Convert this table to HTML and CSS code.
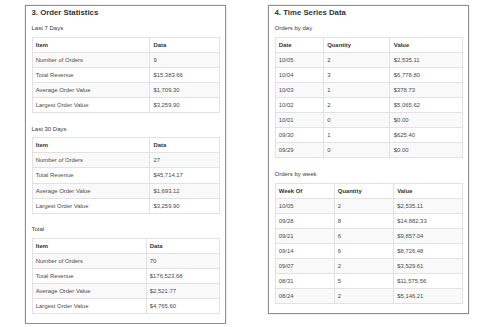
FILE: index.html
```html
<!DOCTYPE html>
<html>
<head>
<meta charset="utf-8">
<link rel="stylesheet" href="styles.css">
</head>
<body>
<div class="page">
  <section class="panel">
    <h3 class="panel-title">3. Order Statistics</h3>
    <h5 class="label">Last 7 Days</h5>
    <table class="grid">
      <colgroup><col class="c-a"><col></colgroup>
      <thead><tr><th>Item</th><th>Data</th></tr></thead>
      <tbody>
        <tr><td>Number of Orders</td><td>9</td></tr>
        <tr><td>Total Revenue</td><td>$15,383.66</td></tr>
        <tr><td>Average Order Value</td><td>$1,709.30</td></tr>
        <tr><td>Largest Order Value</td><td>$3,259.90</td></tr>
      </tbody>
    </table>
    <h5 class="label">Last 30 Days</h5>
    <table class="grid">
      <colgroup><col class="c-a"><col></colgroup>
      <thead><tr><th>Item</th><th>Data</th></tr></thead>
      <tbody>
        <tr><td>Number of Orders</td><td>27</td></tr>
        <tr><td>Total Revenue</td><td>$45,714.17</td></tr>
        <tr><td>Average Order Value</td><td>$1,693.12</td></tr>
        <tr><td>Largest Order Value</td><td>$3,259.90</td></tr>
      </tbody>
    </table>
    <h5 class="label">Total</h5>
    <table class="grid last">
      <colgroup><col class="c-b"><col></colgroup>
      <thead><tr><th>Item</th><th>Data</th></tr></thead>
      <tbody>
        <tr><td>Number of Orders</td><td>70</td></tr>
        <tr><td>Total Revenue</td><td>$176,523.68</td></tr>
        <tr><td>Average Order Value</td><td>$2,521.77</td></tr>
        <tr><td>Largest Order Value</td><td>$4,765.60</td></tr>
      </tbody>
    </table>
  </section>
  <section class="panel">
    <h3 class="panel-title">4. Time Series Data</h3>
    <h5 class="label">Orders by day</h5>
    <table class="grid">
      <colgroup><col class="d-1"><col class="d-2"><col></colgroup>
      <thead><tr><th>Date</th><th>Quantity</th><th>Value</th></tr></thead>
      <tbody>
        <tr><td>10/05</td><td>2</td><td>$2,535.11</td></tr>
        <tr><td>10/04</td><td>3</td><td>$6,778.80</td></tr>
        <tr><td>10/03</td><td>1</td><td>$378.73</td></tr>
        <tr><td>10/02</td><td>2</td><td>$5,065.62</td></tr>
        <tr><td>10/01</td><td>0</td><td>$0.00</td></tr>
        <tr><td>09/30</td><td>1</td><td>$625.40</td></tr>
        <tr><td>09/29</td><td>0</td><td>$0.00</td></tr>
      </tbody>
    </table>
    <h5 class="label">Orders by week</h5>
    <table class="grid last">
      <colgroup><col class="w-1"><col class="w-2"><col></colgroup>
      <thead><tr><th>Week Of</th><th>Quantity</th><th>Value</th></tr></thead>
      <tbody>
        <tr><td>10/05</td><td>2</td><td>$2,535.11</td></tr>
        <tr><td>09/28</td><td>8</td><td>$14,882.33</td></tr>
        <tr><td>09/21</td><td>6</td><td>$9,857.04</td></tr>
        <tr><td>09/14</td><td>6</td><td>$8,726.48</td></tr>
        <tr><td>09/07</td><td>2</td><td>$3,529.61</td></tr>
        <tr><td>08/31</td><td>5</td><td>$11,575.56</td></tr>
        <tr><td>08/24</td><td>2</td><td>$5,146.21</td></tr>
      </tbody>
    </table>
  </section>
</div>
</body>
</html>
```
FILE: styles.css
```css
html, body {
  margin: 0;
  padding: 0;
  background: #fff;
}
body {
  font-family: "Liberation Sans", Arial, sans-serif;
  color: #333;
}
.page {
  display: flex;
  align-items: flex-start;
  gap: 42px;
  padding: 5px 0 0 25px;
}
.panel {
  box-sizing: border-box;
  width: 201px;
  border: 1px solid #8f8f8f;
  box-shadow: 0 0 1px rgba(0, 0, 0, 0.35);
  padding: 2px 5.5px 8.5px;
  background: #fff;
}
.panel-title {
  margin: 0 0 6px;
  font-size: 7.8px;
  line-height: 10px;
  font-weight: bold;
  color: #333;
}
.label {
  margin: 0 0 4.6px;
  font-size: 6px;
  line-height: 8px;
  font-weight: normal;
  color: #3a3a3a;
}
.grid {
  width: 188px;
  border-collapse: collapse;
  table-layout: fixed;
  margin-bottom: 11.6px;
  font-size: 5.9px;
}
.grid.last {
  margin-bottom: 0;
}
.grid th,
.grid td {
  border: 1px solid #e2e2e2;
  padding: 0 3.3px;
  line-height: 14.1px;
  text-align: left;
  white-space: nowrap;
  color: #4a4a4a;
}
.grid th {
  font-weight: bold;
  color: #333;
}
.grid tbody tr:nth-child(odd) td {
  background: #f9f9f9;
}
.c-a { width: 117.6px; }
.c-b { width: 114px; }
.d-1 { width: 48.4px; }
.d-2 { width: 66.6px; }
.w-1 { width: 59px; }
.w-2 { width: 59.4px; }
```
